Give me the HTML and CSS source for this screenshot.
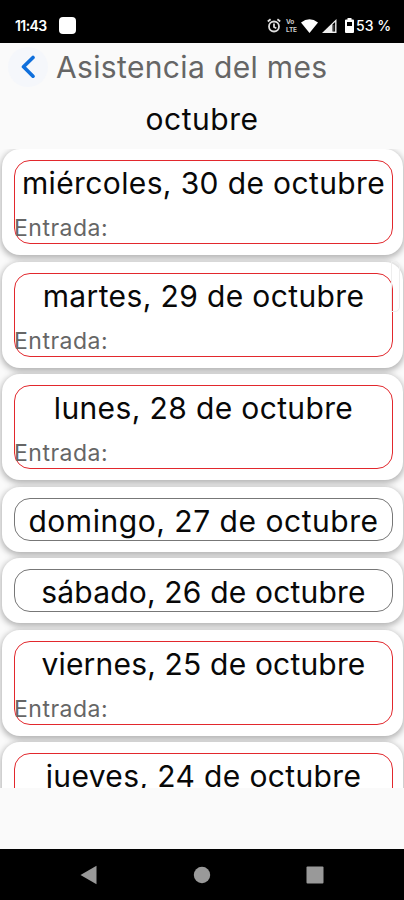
FILE: index.html
```html
<!DOCTYPE html>
<html lang="es">
<head>
    <meta charset="UTF-8">
    <meta name="viewport" content="width=device-width, initial-scale=1.0">
    <title>Asistencia del mes</title>
    <link rel="stylesheet" href="styles.css">
</head>
<body>
    <div class="status-bar">
        <span class="clock">11:43</span>
        <span class="notification"></span>
        <div class="status-icons">
            <svg class="alarm" width="14" height="15" viewBox="0 0 14 15" fill="none" stroke="#ddd" stroke-width="1.8">
                <circle cx="7" cy="8.5" r="5"/>
                <path d="M.8 3.5 3.6 1.2M13.2 3.5 10.4 1.2M7 5.5V9l2.3 1.2"/>
            </svg>
            <div class="volte"><span>Vo</span><span>LTE</span></div>
            <svg class="wifi" width="17" height="14" viewBox="0 0 17 14" fill="#fff">
                <path d="M0 3.5Q8.5-3 17 3.5L8.5 14Z"/>
            </svg>
            <svg class="signal" width="15" height="14" viewBox="0 0 15 14">
                <path d="M0 14 14.5 0V14Z" fill="#eee"/>
                <path d="M10.5 5.5v7h2.6v-9.5z" fill="#000"/>
                <path d="M11.3 6h1v6h-1z" fill="#555"/>
            </svg>
            <svg class="battery" width="9" height="15" viewBox="0 0 9 15">
                <path d="M2.5 0h4v1.5H8q1 0 1 1V14q0 1-1 1H1q-1 0-1-1V2.500q0-1 1-1h1.500z" fill="#fff"/>
                <path d="M2 4h5v4H2z" fill="#000"/>
            </svg>
            <span class="percent">53 %</span>
        </div>
    </div>

    <header class="header">
        <div class="back">
            <svg width="14" height="24" viewBox="0 0 14 24" fill="none" stroke="#0f6fdc" stroke-width="3.600" stroke-linecap="round" stroke-linejoin="round">
                <path d="M12 2.500 2.500 11.800 12 21.200"/>
            </svg>
        </div>
        <h1>Asistencia del mes</h1>
    </header>
    <h2 class="month">octubre</h2>

    <main class="list">
        <div class="card">
            <div class="day absent">
                <div class="date">miércoles, 30 de octubre</div>
                <div class="entry">Entrada:</div>
            </div>
        </div>
        <div class="card">
            <div class="day absent">
                <div class="date">martes, 29 de octubre</div>
                <div class="entry">Entrada:</div>
            </div>
        </div>
        <div class="card">
            <div class="day absent">
                <div class="date">lunes, 28 de octubre</div>
                <div class="entry">Entrada:</div>
            </div>
        </div>
        <div class="card">
            <div class="day">
                <div class="date loose">domingo, 27 de octubre</div>
            </div>
        </div>
        <div class="card">
            <div class="day">
                <div class="date tight">sábado, 26 de octubre</div>
            </div>
        </div>
        <div class="card">
            <div class="day absent">
                <div class="date tight">viernes, 25 de octubre</div>
                <div class="entry">Entrada:</div>
            </div>
        </div>
        <div class="card">
            <div class="day absent">
                <div class="date">jueves, 24 de octubre</div>
                <div class="entry">Entrada:</div>
            </div>
        </div>
        <div class="scroll-thumb"></div>
    </main>

    <nav class="nav-bar">
        <svg width="18" height="20" viewBox="0 0 18 20" fill="#999"><path d="M.5 10 16.500.7V19.300Z"/></svg>
        <svg width="18" height="18" viewBox="0 0 18 18" fill="#999"><circle cx="9" cy="9" r="8.200"/></svg>
        <svg width="18" height="18" viewBox="0 0 18 18" fill="#999"><rect x=".5" y=".5" width="17" height="17" rx="1"/></svg>
    </nav>
</body>
</html>
```

FILE: styles.css
```css
* {
    box-sizing: border-box;
}
body {
    margin: 0;
    height: 900px;
    display: flex;
    flex-direction: column;
    overflow: hidden;
    background: #fafafa;
    font-family: Inter, 'Open Sans', sans-serif;
    color: #080808;
}
svg {
    display: block;
    flex: none;
}
.status-bar {
    height: 43px;
    flex: none;
    display: flex;
    align-items: center;
    padding: 8px 13px 0 15px;
    background: #000;
    color: #fff;
}
.clock {
    width: 44px;
    font-size: 14px;
    font-weight: 600;
    letter-spacing: -0.6px;
}
.notification {
    width: 17px;
    height: 17px;
    border-radius: 4px;
    background: #fff;
}
.status-icons {
    display: flex;
    align-items: center;
    margin-left: auto;
}
.volte {
    display: flex;
    flex-direction: column;
    width: 13px;
    margin: 0 2px 0 5px;
    font-size: 6.5px;
    line-height: 8px;
    font-weight: 700;
    letter-spacing: -0.2px;
    color: #ccc;
}
.signal {
    margin-left: 4px;
}
.battery {
    margin: 0 2px 0 8px;
}
.percent {
    width: 35px;
    font-size: 14px;
    font-weight: 500;
    white-space: nowrap;
}
.header {
    height: 50px;
    flex: none;
    display: flex;
    align-items: center;
    padding: 0 0 2px 8px;
}
.back {
    width: 40px;
    height: 40px;
    display: flex;
    align-items: center;
    justify-content: center;
    border-radius: 50%;
    background: #f5f7fb;
}
h1 {
    margin: 0 0 0 8px;
    font-size: 30px;
    line-height: 40px;
    font-weight: 400;
    letter-spacing: 0.35px;
    white-space: nowrap;
    color: #666;
}
.month {
    height: 56px;
    flex: none;
    margin: 0;
    font-size: 30px;
    line-height: 52px;
    font-weight: 400;
    letter-spacing: 0.55px;
    text-align: center;
}
.list {
    position: relative;
    height: 639px;
    flex: none;
    display: flex;
    flex-direction: column;
    gap: 6.4px;
    padding: 0 1px 0 2px;
    overflow: hidden;
}
.card {
    flex: none;
    padding: 11px 10px 11px 12px;
    border-radius: 18px;
    background: #fff;
    box-shadow: 0 2px 6px 1px rgba(0,0,0,0.3);
}
.day {
    height: 43px;
    border: 1px solid #777;
    border-radius: 16px;
}
.absent {
    height: 84.2px;
    border-color: #e2282d;
}
.date {
    height: 45px;
    font-size: 30px;
    line-height: 44px;
    letter-spacing: 0.37px;
    text-align: center;
    white-space: nowrap;
}
.loose {
    letter-spacing: 0.53px;
}
.tight {
    letter-spacing: 0.18px;
}
.entry {
    font-size: 23px;
    line-height: 45px;
    letter-spacing: 0.5px;
    text-indent: -1px;
    color: #666;
}
.scroll-thumb {
    position: absolute;
    top: 112px;
    right: 4px;
    width: 9px;
    height: 51px;
    border: 1px solid #eee;
    border-radius: 0 5px 5px 0;
}
.nav-bar {
    height: 51px;
    flex: none;
    display: flex;
    align-items: center;
    justify-content: space-between;
    margin-top: auto;
    padding: 0 80px;
    background: #000;
}
```
